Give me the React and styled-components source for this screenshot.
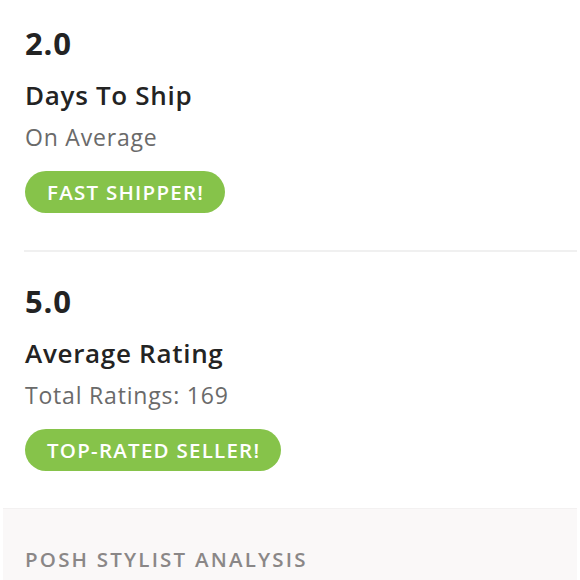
import React from "react";
import styled, { createGlobalStyle } from "styled-components";

const Global = createGlobalStyle`
  html, body { margin: 0; padding: 0; background: #fff; }
  body { font-family: "Open Sans", Lato, "Liberation Sans", sans-serif; -webkit-font-smoothing: antialiased; }
`;

const Page = styled.div`
  width: 580px;
  height: 580px;
  overflow: hidden;
  display: flex;
  flex-direction: column;
`;

const Stat = styled.section`
  padding: ${(p) => p.$top}px 0 0 25px;
  display: flex;
  flex-direction: column;
  align-items: flex-start;
`;

const Value = styled.div`
  font-size: 31px;
  line-height: 36px;
  font-weight: 700;
  letter-spacing: 0.8px;
  color: #232323;
`;

const Title = styled.div`
  margin-top: 19px;
  font-size: 26px;
  line-height: 30px;
  font-weight: 600;
  letter-spacing: 0.7px;
  color: #232323;
`;

const Sub = styled.div`
  margin-top: 13px;
  font-size: 23px;
  line-height: 28px;
  font-weight: 400;
  letter-spacing: 0.8px;
  color: #6a6a6a;
`;

const Pill = styled.div`
  margin-top: 20px;
  height: 42px;
  padding: 0 21px 0 22px;
  border-radius: 21px;
  background: #86c34a;
  color: #fff;
  font-size: 20.5px;
  font-weight: 600;
  letter-spacing: 1.25px;
  display: flex;
  align-items: center;
`;

const Divider = styled.hr`
  margin: 37px 3px 0 24px;
  border: none;
  height: 2px;
  background: #f0f0f0;
`;

const Analysis = styled.div`
  margin: 37px 3px 0 3px;
  flex: 1;
  background: #faf8f8;
  border-top: 1px solid #f3f1f1;
  padding: 37px 0 0 22px;
  font-size: 20.5px;
  line-height: 26px;
  font-weight: 600;
  letter-spacing: 2.2px;
  color: #8a8787;
`;

export default function App() {
  return (
    <Page>
      <Global />
      <Stat $top={25}>
        <Value>2.0</Value>
        <Title>Days To Ship</Title>
        <Sub>On Average</Sub>
        <Pill>FAST SHIPPER!</Pill>
      </Stat>
      <Divider />
      <Stat $top={31}>
        <Value>5.0</Value>
        <Title>Average Rating</Title>
        <Sub>Total Ratings: 169</Sub>
        <Pill>TOP-RATED SELLER!</Pill>
      </Stat>
      <Analysis>POSH STYLIST ANALYSIS</Analysis>
    </Page>
  );
}
